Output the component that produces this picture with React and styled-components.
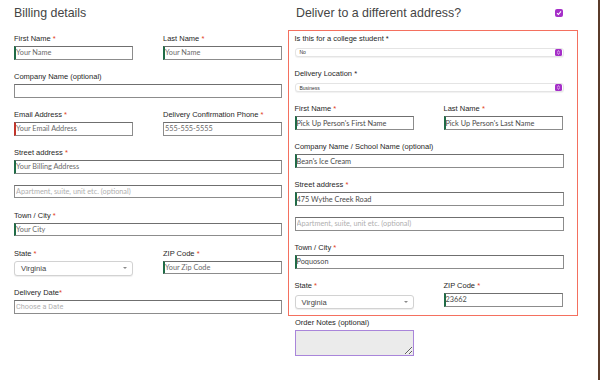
import React from "react";
import styled, { createGlobalStyle } from "styled-components";

const GlobalStyle = createGlobalStyle`
  html, body {
    margin: 0;
    padding: 0;
    background: #fff;
  }
  body {
    font-family: "Liberation Sans", Arial, sans-serif;
    color: #333;
  }
  #root {
    width: 600px;
    height: 380px;
    overflow: hidden;
  }
`;

const Page = styled.div`
  display: flex;
  width: 600px;
  height: 380px;
`;

const Column = styled.div`
  display: flex;
  flex-direction: column;
  width: ${(p) => p.$width}px;
  margin-left: ${(p) => p.$offset}px;
`;

const HeadRow = styled.div`
  display: flex;
  align-items: center;
  justify-content: space-between;
  height: 26px;
  margin-bottom: 4px;
  padding: 0 ${(p) => p.$padRight || 0}px 0 ${(p) => p.$padLeft || 0}px;
`;

const Heading = styled.h3`
  margin: 0;
  font-size: 12.4px;
  line-height: 26px;
  font-weight: 400;
  color: #454545;
`;

const Checkbox = styled.span`
  display: flex;
  align-items: center;
  justify-content: center;
  width: 8px;
  height: 8px;
  border-radius: 2px;
  background: #a52fc8;
`;

const Fields = styled.div`
  display: flex;
  flex-direction: column;
  padding-top: ${(p) => p.$top || 0}px;
`;

const Field = styled.div`
  display: flex;
  flex-direction: column;
  margin-bottom: ${(p) => (p.$tight ? 11 : 13.3)}px;
`;

const Label = styled.label`
  display: block;
  height: 8px;
  font-size: 7.5px;
  line-height: 8px;
  color: #1f1f1f;
  margin-bottom: ${(p) => p.$gap || 3}px;
  white-space: nowrap;
`;

const Req = styled.span`
  color: ${(p) => (p.$plain ? "#1f1f1f" : "#e2401c")};
`;

const Row = styled.div`
  display: grid;
  grid-template-columns: 119px 119px;
  column-gap: 30px;
`;

const accents = {
  green: "2px solid #1f6b46",
  red: "2px solid #c2352a",
  none: "1px solid #8c8c8c",
};

const TextInput = styled.input`
  box-sizing: border-box;
  width: 100%;
  height: 13.7px;
  margin: 0;
  padding: 0 0 0 ${(p) => (p.$accent && p.$accent !== "none" ? 0 : 1)}px;
  border: 1px solid #8c8c8c;
  border-top-color: #6f6f6f;
  border-left: ${(p) => accents[p.$accent || "none"]};
  border-radius: 0;
  background: #fff;
  font-family: Lato, "Noto Sans", sans-serif;
  font-size: 7.3px;
  color: #4a4a4a;
  outline: none;
  &::placeholder {
    color: ${(p) => (p.$faint ? "#b0b0b0" : "#6a6a6a")};
    font-family: ${(p) => (p.$roboto ? "Roboto, sans-serif" : "Lato, sans-serif")};
  }
`;

const SelectBox = styled.div`
  box-sizing: border-box;
  display: flex;
  align-items: center;
  justify-content: space-between;
  height: 14.3px;
  padding: 0 5px 0 6px;
  border: 1px solid #d2d2d2;
  border-radius: 3px;
  box-shadow: 0 1px 1px rgba(0, 0, 0, 0.07);
  background: #fff;
  font-size: 7.6px;
  color: #444;
`;

const Caret = styled.span`
  width: 0;
  height: 0;
  border-left: 2px solid transparent;
  border-right: 2px solid transparent;
  border-top: 2.5px solid #8a8a8a;
`;

const MiniSelect = styled.div`
  box-sizing: border-box;
  display: flex;
  align-items: center;
  justify-content: space-between;
  height: 9px;
  padding: 0 1px 0 4px;
  border: 1px solid #e4e4e4;
  border-radius: 3px;
  box-shadow: 0 1px 1px rgba(0, 0, 0, 0.06);
  background: #fff;
  font-size: 5px;
  color: #333;
`;

const MiniArrow = styled.span`
  display: flex;
  align-items: center;
  justify-content: center;
  width: 7px;
  height: 7px;
  border-radius: 1.5px;
  background: #a52fc8;
`;

const ShipBox = styled.div`
  box-sizing: border-box;
  width: 290px;
  height: 286px;
  padding: 3.8px 13.5px 0 5.5px;
  border: 1.5px solid #f4705f;
`;

const Notes = styled.div`
  padding: 3.3px 0 0 7px;
`;

const NoteArea = styled.textarea`
  box-sizing: border-box;
  display: block;
  width: 119px;
  height: 26px;
  margin: 0;
  border: 1.5px solid #a985da;
  border-radius: 0;
  background: #ebebeb;
  outline: none;
`;

const Edge = styled.div`
  margin-left: auto;
  width: 1.7px;
  height: 380px;
  background: #5a3b2a;
`;

const Input = ({ label, req = true, tight, ...rest }) => (
  <Field $tight={tight}>
    {label && (
      <Label>
        {label} {req && <Req>*</Req>}
      </Label>
    )}
    <TextInput readOnly {...rest} />
  </Field>
);

const StateSelect = ({ label }) => (
  <Field>
    <Label $gap={label === "right" ? 5 : 3.7}>
      State <Req>*</Req>
    </Label>
    <SelectBox>
      Virginia
      <Caret />
    </SelectBox>
  </Field>
);

const Mini = ({ label, value }) => (
  <Field>
    <Label $gap={5}>
      {label} <Req $plain>*</Req>
    </Label>
    <MiniSelect>
      {value}
      <MiniArrow>
        <svg width="5" height="5" viewBox="0 0 5 5">
          <path d="M1.3 2 L2.5 0.9 L3.7 2 M1.3 3 L2.5 4.1 L3.7 3" fill="none" stroke="#fff" strokeWidth="0.8" />
        </svg>
      </MiniArrow>
    </MiniSelect>
  </Field>
);

export default function App() {
  return (
    <Page>
      <GlobalStyle />
      <Column $width={268} $offset={14}>
        <HeadRow>
          <Heading>Billing details</Heading>
        </HeadRow>
        <Fields $top={5}>
          <Row>
            <Input label="First Name" placeholder="Your Name" $accent="green" />
            <Input label="Last Name" placeholder="Your Name" $accent="green" />
          </Row>
          <Input label="Company Name (optional)" req={false} />
          <Row>
            <Input label="Email Address" placeholder="Your Email Address" $accent="red" />
            <Input label="Delivery Confirmation Phone" placeholder="555-555-5555" />
          </Row>
          <Input label="Street address" placeholder="Your Billing Address" $accent="green" tight />
          <Input placeholder="Apartment, suite, unit etc. (optional)" $faint />
          <Input label="Town / City" placeholder="Your City" $accent="green" />
          <Row>
            <StateSelect />
            <Input label="ZIP Code" placeholder="Your Zip Code" $accent="green" />
          </Row>
          <Field>
            <Label>
              Delivery Date<Req>*</Req>
            </Label>
            <TextInput readOnly placeholder="Choose a Date" $faint $roboto />
          </Field>
        </Fields>
      </Column>

      <Column $width={290} $offset={6}>
        <HeadRow $padLeft={8} $padRight={15.5}>
          <Heading>Deliver to a different address?</Heading>
          <Checkbox>
            <svg width="6" height="6" viewBox="0 0 6 6">
              <path d="M1 3.1 L2.4 4.5 L5 1.4" fill="none" stroke="#fff" strokeWidth="1.1" />
            </svg>
          </Checkbox>
        </HeadRow>
        <ShipBox>
          <Mini label="Is this for a college student" value="No" />
          <Mini label="Delivery Location" value="Business" />
          <Row>
            <Input label="First Name" defaultValue="Pick Up Person's First Name" $accent="green" />
            <Input label="Last Name" defaultValue="Pick Up Person's Last Name" $accent="green" />
          </Row>
          <Input label="Company Name / School Name (optional)" req={false} defaultValue="Bean's Ice Cream" $accent="green" />
          <Input label="Street address" defaultValue="475 Wythe Creek Road" $accent="green" tight />
          <Input placeholder="Apartment, suite, unit etc. (optional)" $faint />
          <Input label="Town / City" defaultValue="Poquoson" $accent="green" />
          <Row>
            <StateSelect label="right" />
            <Input label="ZIP Code" defaultValue="23662" $accent="green" />
          </Row>
        </ShipBox>
        <Notes>
          <Label>Order Notes (optional)</Label>
          <NoteArea readOnly />
        </Notes>
      </Column>
      <Edge />
    </Page>
  );
}
